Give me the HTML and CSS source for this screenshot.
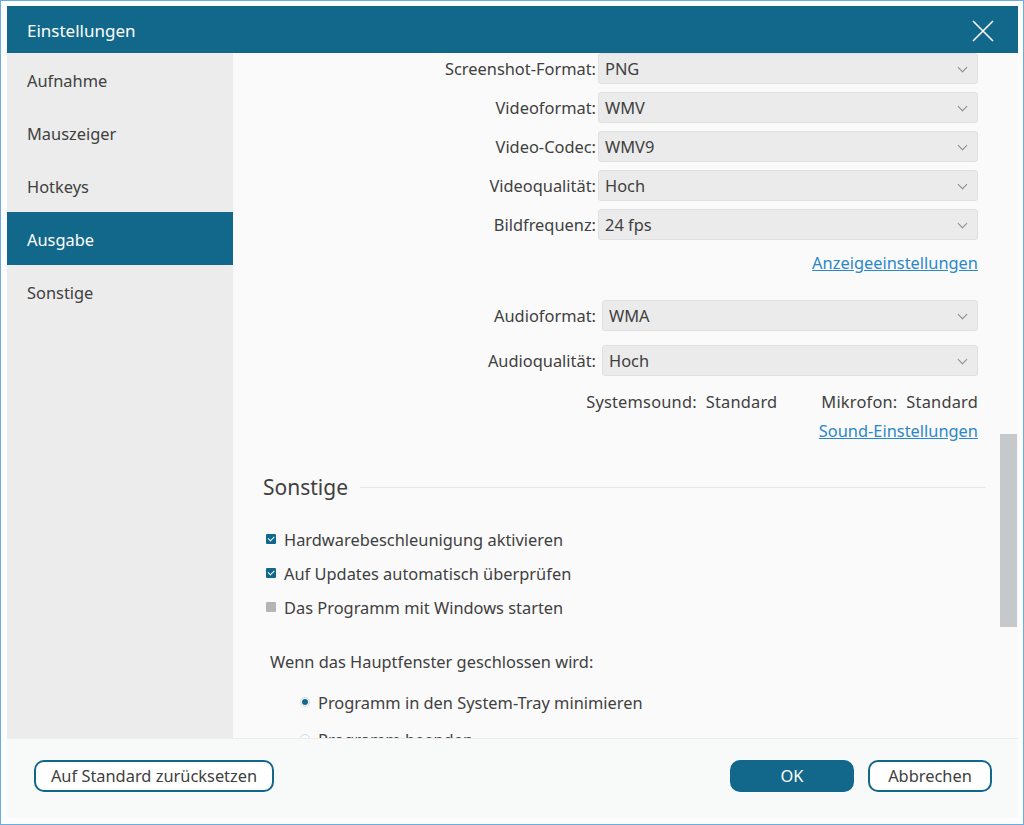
FILE: index.html
```html
<!DOCTYPE html>
<html lang="de">
<head>
  <meta charset="UTF-8" />
  <title>Einstellungen</title>
  <link rel="stylesheet" href="styles.css">
</head>
<body>
  <div class="rahmen">
    <div class="fenster">
      <header class="titelleiste">
        <span>Einstellungen</span>
        <button class="schliessen" aria-label="Schließen">
          <svg width="22" height="22" viewBox="0 0 22 22"><path d="M1 1 L21 21 M21 1 L1 21" stroke="#fff" stroke-width="1.6" fill="none"/></svg>
        </button>
      </header>

      <div class="hauptbereich">
        <nav class="seitenleiste">
          <a>Aufnahme</a>
          <a>Mauszeiger</a>
          <a>Hotkeys</a>
          <a class="aktiv">Ausgabe</a>
          <a>Sonstige</a>
        </nav>

        <div class="inhalt">
          <div class="scrollbereich">
            <div class="formular">
              <label>Screenshot-Format:</label>
              <div class="auswahl">PNG</div>
              <label>Videoformat:</label>
              <div class="auswahl">WMV</div>
              <label>Video-Codec:</label>
              <div class="auswahl">WMV9</div>
              <label>Videoqualität:</label>
              <div class="auswahl">Hoch</div>
              <label>Bildfrequenz:</label>
              <div class="auswahl">24 fps</div>
            </div>
            <div class="link-zeile"><a href="#">Anzeigeeinstellungen</a></div>

            <div class="formular audio">
              <label>Audioformat:</label>
              <div class="auswahl">WMA</div>
              <label>Audioqualität:</label>
              <div class="auswahl">Hoch</div>
            </div>
            <div class="geraete">
              <span>Systemsound:&nbsp; Standard</span>
              <span>Mikrofon:&nbsp; Standard</span>
            </div>
            <div class="link-zeile sound"><a href="#">Sound-Einstellungen</a></div>

            <h2 class="abschnitt">Sonstige</h2>
            <div class="optionen">
              <div class="option"><span class="kaestchen an"></span>Hardwarebeschleunigung aktivieren</div>
              <div class="option"><span class="kaestchen an"></span>Auf Updates automatisch überprüfen</div>
              <div class="option"><span class="kaestchen"></span>Das Programm mit Windows starten</div>
            </div>
            <p class="frage">Wenn das Hauptfenster geschlossen wird:</p>
            <div class="radio-liste">
              <div class="option"><span class="radio an"></span>Programm in den System-Tray minimieren</div>
              <div class="option"><span class="radio"></span>Programm beenden</div>
            </div>
          </div>
          <div class="scrollleiste"><div class="griff"></div></div>
        </div>
      </div>

      <footer class="fusszeile">
        <button class="knopf breit">Auf Standard zurücksetzen</button>
        <div class="rechts">
          <button class="knopf primaer">OK</button>
          <button class="knopf">Abbrechen</button>
        </div>
      </footer>
    </div>
  </div>
</body>
</html>
```

FILE: styles.css
```css
body {
  margin: 0;
  font-family: "Noto Sans", "Liberation Sans", sans-serif;
  background: #fdfdfd;
  color: #404040;
}
.rahmen {
  width: 1024px;
  height: 825px;
  box-sizing: border-box;
  border: 1px solid #6aaee0;
  padding: 5px 5px 0 6px;
}
.fenster {
  width: 1011px;
  height: 812px;
  display: flex;
  flex-direction: column;
  background: #fafafa;
}
.titelleiste {
  height: 47px;
  flex: none;
  background: #12688b;
  color: white;
  font-size: 17px;
  display: flex;
  align-items: center;
  justify-content: space-between;
  padding: 2px 24px 0 20px;
  box-sizing: border-box;
}
.schliessen {
  background: none;
  border: none;
  padding: 0;
  display: flex;
}
.hauptbereich {
  display: flex;
  height: 685px;
  flex: none;
}
.seitenleiste {
  width: 226px;
  background: #ececec;
  display: flex;
  flex-direction: column;
}
.seitenleiste a {
  height: 53px;
  line-height: 55px;
  padding-left: 20px;
  font-size: 16.4px;
  color: #404040;
}
.seitenleiste a.aktiv {
  background: #12688b;
  color: white;
}
.inhalt {
  flex: 1;
  display: flex;
  background: #fafafa;
}
.scrollbereich {
  flex: 1;
  overflow: hidden;
  padding: 0 15px 0 30px;
  font-size: 16.4px;
}
.scrollleiste {
  width: 17px;
  margin-right: 1px;
}
.griff {
  margin-top: 381px;
  height: 193px;
  background: #c6c9cc;
}
.formular {
  display: grid;
  grid-template-columns: 1fr 380px;
  column-gap: 2px;
  row-gap: 8px;
  align-items: center;
  margin-right: 7px;
}
.formular label {
  text-align: right;
}
.formular.audio {
  grid-template-columns: 1fr 376px;
  column-gap: 6px;
  row-gap: 14px;
  margin-top: 26px;
}
.auswahl {
  height: 31px;
  box-sizing: border-box;
  border: 1px solid #e0e0e0;
  border-radius: 3px;
  background: #ebebeb;
  padding: 0 6px;
  line-height: 29px;
  position: relative;
}
.auswahl::after {
  content: "";
  position: absolute;
  right: 11px;
  top: 10px;
  width: 6px;
  height: 6px;
  border-right: 1.5px solid #8a8a8a;
  border-bottom: 1.5px solid #8a8a8a;
  transform: rotate(45deg);
}
.link-zeile {
  text-align: right;
  margin: 11px 7px 0 0;
}
.link-zeile a {
  color: #2a88c8;
}
.link-zeile.sound {
  margin-top: 6px;
}
.geraete {
  display: flex;
  justify-content: flex-end;
  gap: 44px;
  margin: 14px 7px 0 0;
  letter-spacing: 0.2px;
}
.abschnitt {
  display: flex;
  align-items: center;
  gap: 12px;
  font-size: 21px;
  font-weight: normal;
  margin: 31px 0 0 0;
}
.abschnitt::after {
  content: "";
  flex: 1;
  border-top: 1px solid #e6e6e6;
}
.optionen {
  margin: 26px 0 0 3px;
  display: flex;
  flex-direction: column;
  gap: 10px;
}
.option {
  display: flex;
  align-items: center;
  height: 24px;
}
.kaestchen {
  width: 10px;
  height: 10px;
  margin-right: 8px;
  background: #b4b4b4;
  border-radius: 1px;
  position: relative;
}
.kaestchen.an {
  background: #12688b;
}
.kaestchen.an::after {
  content: "";
  position: absolute;
  left: 2px;
  top: 2px;
  width: 5px;
  height: 2.5px;
  border-left: 1.5px solid white;
  border-bottom: 1.5px solid white;
  transform: rotate(-45deg);
}
.frage {
  margin: 31px 0 0 7px;
}
.radio-liste {
  margin: 17px 0 0 37px;
  display: flex;
  flex-direction: column;
  gap: 13px;
}
.radio {
  width: 8px;
  height: 8px;
  border: 1px solid #c8d8e4;
  border-radius: 50%;
  margin-right: 8px;
  background: white;
  position: relative;
}
.radio.an::after {
  content: "";
  position: absolute;
  left: 1px;
  top: 1px;
  width: 6px;
  height: 6px;
  border-radius: 50%;
  background: #12688b;
}
.fusszeile {
  flex: 1;
  border-top: 1px solid #ececec;
  background: #f8f9f9;
  display: flex;
  align-items: center;
  justify-content: space-between;
  padding: 0 26px 6px 27px;
}
.rechts {
  display: flex;
  gap: 14px;
}
.knopf {
  height: 32px;
  border: 2px solid #12688b;
  border-radius: 10px;
  background: white;
  color: #404040;
  font-family: inherit;
  font-size: 16.4px;
  padding: 0 10px;
}
.knopf.breit {
  width: 240px;
}
.knopf.primaer {
  background: #12688b;
  color: white;
}
.rechts .knopf {
  width: 124px;
}
```
